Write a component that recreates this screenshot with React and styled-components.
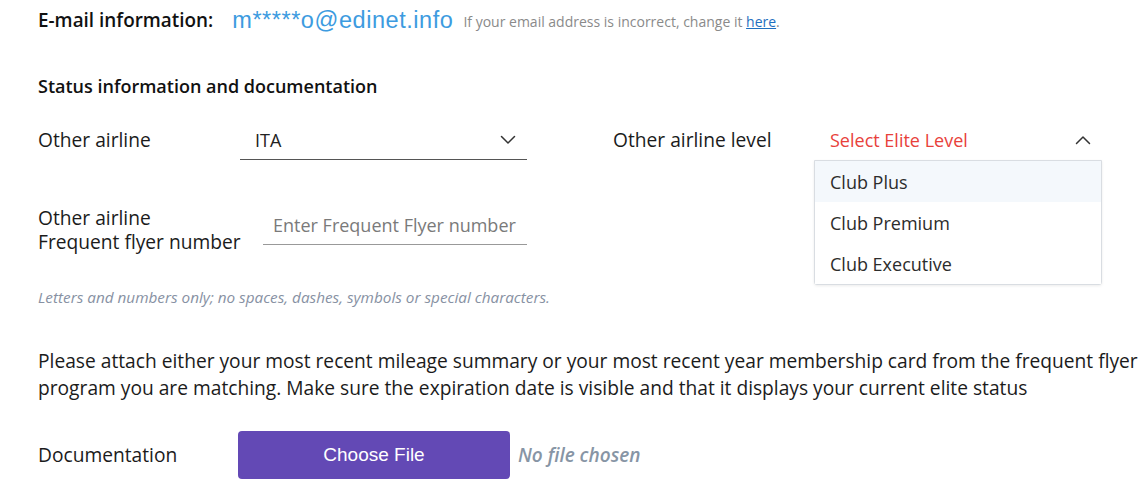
import React from "react";
import styled, { createGlobalStyle } from "styled-components";

const Global = createGlobalStyle`
  html, body { margin: 0; padding: 0; background: #fff; }
  body { font-family: "Open Sans", "Noto Sans", sans-serif; color: #1b1b1b; }
`;

const Page = styled.div`
  width: 1146px;
  height: 496px;
  overflow: hidden;
  box-sizing: border-box;
  padding: 0 0 0 38px;
`;

const EmailRow = styled.div`
  height: 40px;
  display: flex;
  align-items: center;
  white-space: nowrap;
`;

const EmailLabel = styled.span`
  font-size: 18.9px;
  font-weight: 600;
  color: #111;
  margin-right: 19px;
`;

const EmailValue = styled.span`
  font-family: "Liberation Sans", Arial, sans-serif;
  font-size: 23.5px;
  letter-spacing: 0.55px;
  color: #3d9be0;
  margin-right: 10px;
`;

const EmailNote = styled.span`
  font-size: 14px;
  color: #8a8a8a;
  position: relative;
  top: 1px;
  a { color: #1f6fc0; text-decoration: underline; }
`;

const SectionTitle = styled.h2`
  margin: 34px 0 0;
  font-size: 18px;
  line-height: 24px;
  font-weight: 600;
  color: #111;
`;

const FormGrid = styled.div`
  margin-top: 22px;
  display: grid;
  grid-template-columns: 489px 489px;
  column-gap: 86px;
  row-gap: 45px;
  align-items: start;
`;

const Field = styled.div`
  display: flex;
  align-items: ${(p) => (p.$top ? "flex-start" : "center")};
`;

const Label = styled.div`
  width: ${(p) => p.$w}px;
  flex: none;
  font-size: 19.2px;
  line-height: 24px;
  color: #1b1b1b;
  padding-top: ${(p) => (p.$top ? 1 : 0)}px;
`;

const SelectWrap = styled.div`
  position: relative;
  flex: 1;
`;

const SelectBox = styled.div`
  height: 40px;
  box-sizing: border-box;
  border-bottom: ${(p) => (p.$open ? "none" : "1px solid #555")};
  display: flex;
  align-items: center;
  justify-content: space-between;
  padding: 0 11px 0 ${(p) => p.$pl}px;
  font-size: 18px;
  color: ${(p) => (p.$placeholder ? "#e8413b" : "#222")};
`;

const Menu = styled.ul`
  position: absolute;
  top: 40px;
  left: 0;
  right: 0;
  margin: 0;
  padding: 0;
  list-style: none;
  background: #fff;
  border: 1px solid #d9dde2;
  border-radius: 0 0 3px 3px;
  box-shadow: 0 1px 3px rgba(0, 0, 0, 0.08);
`;

const Option = styled.li`
  height: 41px;
  display: flex;
  align-items: center;
  padding-left: 15px;
  font-size: 18px;
  color: #2c2c2c;
  background: ${(p) => (p.$active ? "#f4f8fc" : "#fff")};
`;

const TextInput = styled.div`
  flex: 1;
  height: 40px;
  box-sizing: border-box;
  border-bottom: 1px solid #999;
  display: flex;
  align-items: center;
  padding-left: 10px;
  font-size: 18px;
  color: #7a7a7a;
`;

const Hint = styled.p`
  margin: 33px 0 0;
  font-size: 15.3px;
  line-height: 20px;
  font-style: italic;
  color: #8791a3;
  white-space: nowrap;
`;

const Paragraph = styled.p`
  margin: 40px 0 0;
  font-size: 19.2px;
  line-height: 27px;
  color: #1b1b1b;
  white-space: nowrap;
`;

const DocRow = styled.div`
  margin-top: 30px;
  display: flex;
  align-items: center;
`;

const FileButton = styled.button`
  width: 272px;
  height: 48px;
  border: none;
  border-radius: 4px;
  background: #6349b5;
  color: #fff;
  font-family: "Liberation Sans", Arial, sans-serif;
  font-size: 19px;
  cursor: pointer;
  padding: 0;
`;

const NoFile = styled.span`
  margin-left: 8px;
  font-size: 19px;
  font-style: italic;
  font-weight: 600;
  color: #8795a5;
`;

const Chevron = ({ up }) => (
  <svg width="16" height="10" viewBox="0 0 16 10" fill="none">
    <polyline
      points={up ? "1.5,8.5 8,2 14.5,8.5" : "1.5,1.5 8,8 14.5,1.5"}
      stroke="#333"
      strokeWidth="1.5"
      strokeLinecap="round"
      strokeLinejoin="round"
    />
  </svg>
);

export default function App() {
  return (
    <>
      <Global />
      <Page>
        <EmailRow>
          <EmailLabel>E-mail information:</EmailLabel>
          <EmailValue>m*****o@edinet.info</EmailValue>
          <EmailNote>
            If your email address is incorrect, change it <a href="#">here</a>.
          </EmailNote>
        </EmailRow>

        <SectionTitle>Status information and documentation</SectionTitle>

        <FormGrid>
          <Field>
            <Label $w={202}>Other airline</Label>
            <SelectWrap>
              <SelectBox $pl={15}>
                <span>ITA</span>
                <Chevron />
              </SelectBox>
            </SelectWrap>
          </Field>
          <Field>
            <Label $w={201}>Other airline level</Label>
            <SelectWrap>
              <SelectBox $pl={16} $open $placeholder>
                <span>Select Elite Level</span>
                <Chevron up />
              </SelectBox>
              <Menu>
                <Option $active>Club Plus</Option>
                <Option>Club Premium</Option>
                <Option>Club Executive</Option>
              </Menu>
            </SelectWrap>
          </Field>
          <Field $top>
            <Label $w={225} $top>
              Other airline
              <br />
              Frequent flyer number
            </Label>
            <TextInput>Enter Frequent Flyer number</TextInput>
          </Field>
        </FormGrid>

        <Hint>Letters and numbers only; no spaces, dashes, symbols or special characters.</Hint>

        <Paragraph>
          Please attach either your most recent mileage summary or your most recent year membership card from the frequent flyer
          <br />
          program you are matching. Make sure the expiration date is visible and that it displays your current elite status
        </Paragraph>

        <DocRow>
          <Label $w={200}>Documentation</Label>
          <FileButton>Choose File</FileButton>
          <NoFile>No file chosen</NoFile>
        </DocRow>
      </Page>
    </>
  );
}
